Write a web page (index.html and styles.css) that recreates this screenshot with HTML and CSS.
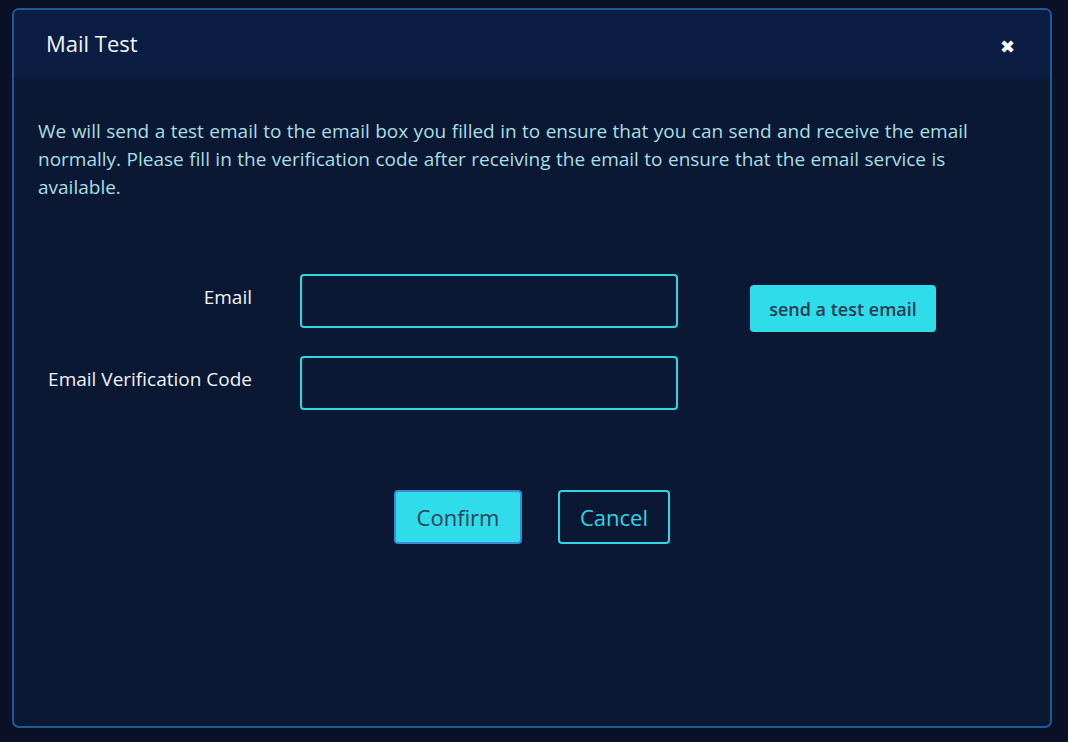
FILE: index.html
```html
<!DOCTYPE html>
<html>
<head>
<meta charset="utf-8">
<link rel="stylesheet" href="styles.css">
</head>
<body>
<div class="modal">
  <div class="modal-header">
    <div class="title">Mail Test</div>
    <div class="close">&#10006;</div>
  </div>
  <div class="modal-body">
    <p class="intro">We will send a test email to the email box you filled in to ensure that you can send and receive the email normally. Please fill in the verification code after receiving the email to ensure that the email service is available.</p>
    <div class="form">
      <label class="label">Email</label>
      <input class="input" type="text">
      <button class="send-btn">send a test email</button>
      <label class="label">Email Verification Code</label>
      <input class="input" type="text">
      <div></div>
    </div>
    <div class="actions">
      <button class="btn btn-primary">Confirm</button>
      <button class="btn btn-outline">Cancel</button>
    </div>
  </div>
</div>
</body>
</html>
```

FILE: styles.css
```css
* { box-sizing: border-box; }
html, body {
  margin: 0;
  padding: 0;
  background: #0a1126;
  font-family: "Open Sans", "Noto Sans", sans-serif;
}
body {
  width: 1068px;
  height: 742px;
  padding: 8px 16px 14px 12px;
}
.modal {
  width: 1040px;
  height: 720px;
  border: 2px solid #1d5a97;
  border-radius: 7px;
  background: #0a1834;
  overflow: hidden;
  display: flex;
  flex-direction: column;
}
.modal-header {
  height: 68px;
  background: #0b1d42;
  display: flex;
  align-items: center;
  justify-content: space-between;
  padding: 0 35px 0 32px;
}
.title {
  color: #f2f5fa;
  font-size: 22px;
  margin-top: -2px;
}
.close {
  color: #ffffff;
  font-size: 18px;
  line-height: 1;
  margin-top: 4px;
}
.modal-body {
  padding: 39px 24px 0 24px;
}
.intro {
  margin: 0;
  color: #a9dfe3;
  font-size: 19px;
  line-height: 28px;
  padding-right: 40px;
  word-spacing: 0.5px;
}
.form {
  margin-top: 73px;
  display: grid;
  grid-template-columns: 214px 378px auto;
  column-gap: 48px;
  row-gap: 24px;
  align-items: start;
}
.label {
  color: #f0f3f8;
  font-size: 19px;
  text-align: right;
  line-height: 26px;
  padding-top: 10px;
  white-space: nowrap;
}
.input {
  height: 54px;
  border: 2px solid #2fd6e6;
  border-radius: 4px;
  background: #0a1834;
  color: #fff;
  outline: none;
  font-family: inherit;
  font-size: 16px;
  padding: 0 12px;
}
.send-btn {
  justify-self: start;
  margin-left: 24px;
  margin-top: 11px;
  width: 186px;
  height: 47px;
  padding: 0;
  border: none;
  border-radius: 4px;
  background: #2fdce9;
  color: #2a3a52;
  font-family: inherit;
  font-size: 18px;
  font-weight: 600;
}
.actions {
  margin-top: 80px;
  display: flex;
  justify-content: center;
  gap: 36px;
}
.btn {
  height: 54px;
  border-radius: 4px;
  font-family: inherit;
  font-size: 22px;
  padding: 0;
}
.btn-primary {
  width: 128px;
  background: #2fdce9;
  border: 2px solid #3a8ad6;
  color: #2e3f57;
}
.btn-outline {
  width: 112px;
  background: transparent;
  border: 2px solid #2fd6e6;
  color: #2fd6e6;
}
```
